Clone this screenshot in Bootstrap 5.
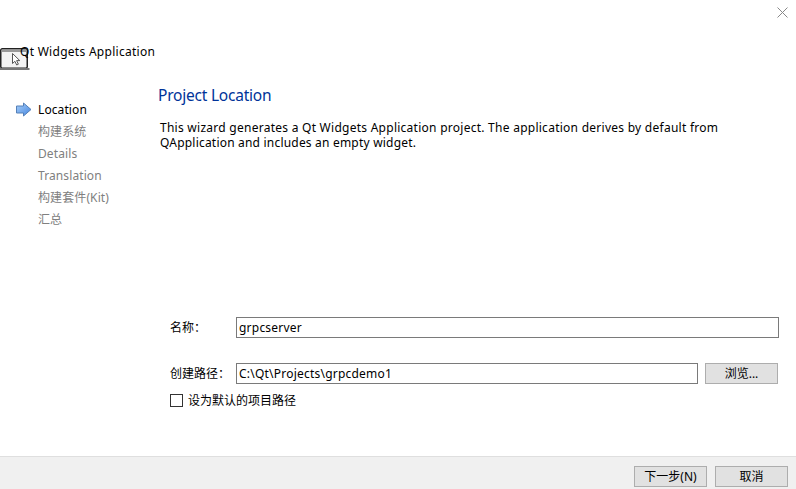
<!DOCTYPE html>
<html lang="zh-CN">
<head>
<meta charset="utf-8">
<meta name="viewport" content="width=device-width, initial-scale=1">
<title>Qt Widgets Application</title>
<link href="https://cdn.jsdelivr.net/npm/bootstrap@5.3.0/dist/css/bootstrap.min.css" rel="stylesheet">
<style>
body{font-family:"Noto Sans","Noto Sans CJK SC",sans-serif;font-size:12px;line-height:15px;color:#000;background:#fff}
.wizard{height:489px}
.title-strip{height:44px;padding:7px 8px 0 0}
.app-header{height:34px}
.app-header svg{flex:none;margin-top:3px}
.app-name{margin-left:-10px;letter-spacing:.28px}
.steps{width:158px;padding:21px 0 0 38px}
.steps .step{height:22px;line-height:22px;color:#808080;letter-spacing:.1px}
.steps .step.current{color:#000}
.step-arrow{left:-23px;top:3px}
.page-heading{font-size:15.5px;line-height:20px;letter-spacing:-.22px;color:#003399;padding-top:7px;margin:0;font-weight:400}
.intro{padding:15px 0 0 2px;height:132px;margin:0;letter-spacing:.26px}
.intro .line-two{letter-spacing:.2px}
.fields{padding:0 17px 0 12px;margin-top:80px}
.field-label{width:66px;line-height:21px}
.edit{height:21px;border:1px solid #7a7a7a;border-radius:0;padding:0 2px;font-size:12px;line-height:19px;letter-spacing:.22px;color:#000;min-height:0}
.push{height:21px;width:73px;border:1px solid #adadad;border-radius:0;background:#e1e1e1;padding:0;font-size:12px;line-height:19px;color:#000}
.path-row{margin-top:25px;height:22px}
.browse{margin:0 1px 0 7px}
.tick{width:13px;height:13px;margin:0 5px 0 0;border:1px solid #333;border-radius:0!important}
.wizard-footer{height:33px;background:#f0f0f0;border-top:1px solid #dfdfdf;padding:9px 8px 0 0;gap:8px}
</style>
</head>
<body>
<div class="wizard d-flex flex-column overflow-hidden">
  <div class="title-strip d-flex justify-content-end">
    <svg width="11" height="11" viewBox="0 0 11 11" role="button" aria-label="Close"><path d="M.5.5l10 10M10.5.5l-10 10" stroke="#888" fill="none"/></svg>
  </div>
  <header class="app-header d-flex align-items-start">
    <svg width="30" height="24" viewBox="0 0 30 24">
      <rect x=".75" y="1.75" width="26.5" height="19.500" rx="1.5" fill="#f3f3f3" stroke="#222" stroke-width="1.5"/>
      <path d="M1.500 2.500h25v2.500h-25z" fill="#999"/>
      <path d="M0 21h29.500v2H0z" fill="#777"/>
      <path d="M12.500 6.500v10l2.400-2.200 1.800 3.700 1.700-.8-1.800-3.600h3.200z" fill="#fff" stroke="#555"/>
    </svg>
    <span class="app-name">Qt Widgets Application</span>
  </header>
  <main class="d-flex flex-grow-1">
    <nav class="steps flex-shrink-0">
      <div class="step current position-relative">
        <svg class="step-arrow position-absolute" width="17" height="16" viewBox="0 0 17 16">
          <defs><linearGradient id="blue" x1="0" y1="0" x2="1" y2="1"><stop stop-color="#a9d0fa"/><stop offset="1" stop-color="#4384de"/></linearGradient></defs>
          <path d="M1.500 4h7V1l7.500 6.500L8.500 14v-3h-7z" fill="url(#blue)" stroke="#5580b8" stroke-linejoin="round"/>
        </svg>Location
      </div>
      <div class="step">构建系统</div>
      <div class="step">Details</div>
      <div class="step">Translation</div>
      <div class="step">构建套件(Kit)</div>
      <div class="step">汇总</div>
    </nav>
    <section class="flex-grow-1">
      <h1 class="page-heading">Project Location</h1>
      <p class="intro">This wizard generates a Qt Widgets Application project. The application derives by default from<br><span class="line-two">QApplication and includes an empty widget.</span></p>
      <form class="fields">
        <div class="d-flex">
          <label class="field-label" for="name">名称：</label>
          <input id="name" class="edit form-control flex-fill w-auto" value="grpcserver">
        </div>
        <div class="path-row d-flex">
          <label class="field-label" for="path">创建路径：</label>
          <input id="path" class="edit form-control flex-fill w-auto" value="C:\Qt\Projects\grpcdemo1">
          <button type="button" class="push browse btn">浏览...</button>
        </div>
        <div class="d-flex align-items-center mt-2">
          <input id="def" type="checkbox" class="tick form-check-input"><label for="def">设为默认的项目路径</label>
        </div>
      </form>
    </section>
  </main>
  <footer class="wizard-footer d-flex justify-content-end flex-shrink-0">
    <button type="button" class="push btn">下一步(N)</button>
    <button type="button" class="push btn">取消</button>
  </footer>
</div>
<script src="https://cdn.jsdelivr.net/npm/bootstrap@5.3.0/dist/js/bootstrap.bundle.min.js"></script>
</body>
</html>
